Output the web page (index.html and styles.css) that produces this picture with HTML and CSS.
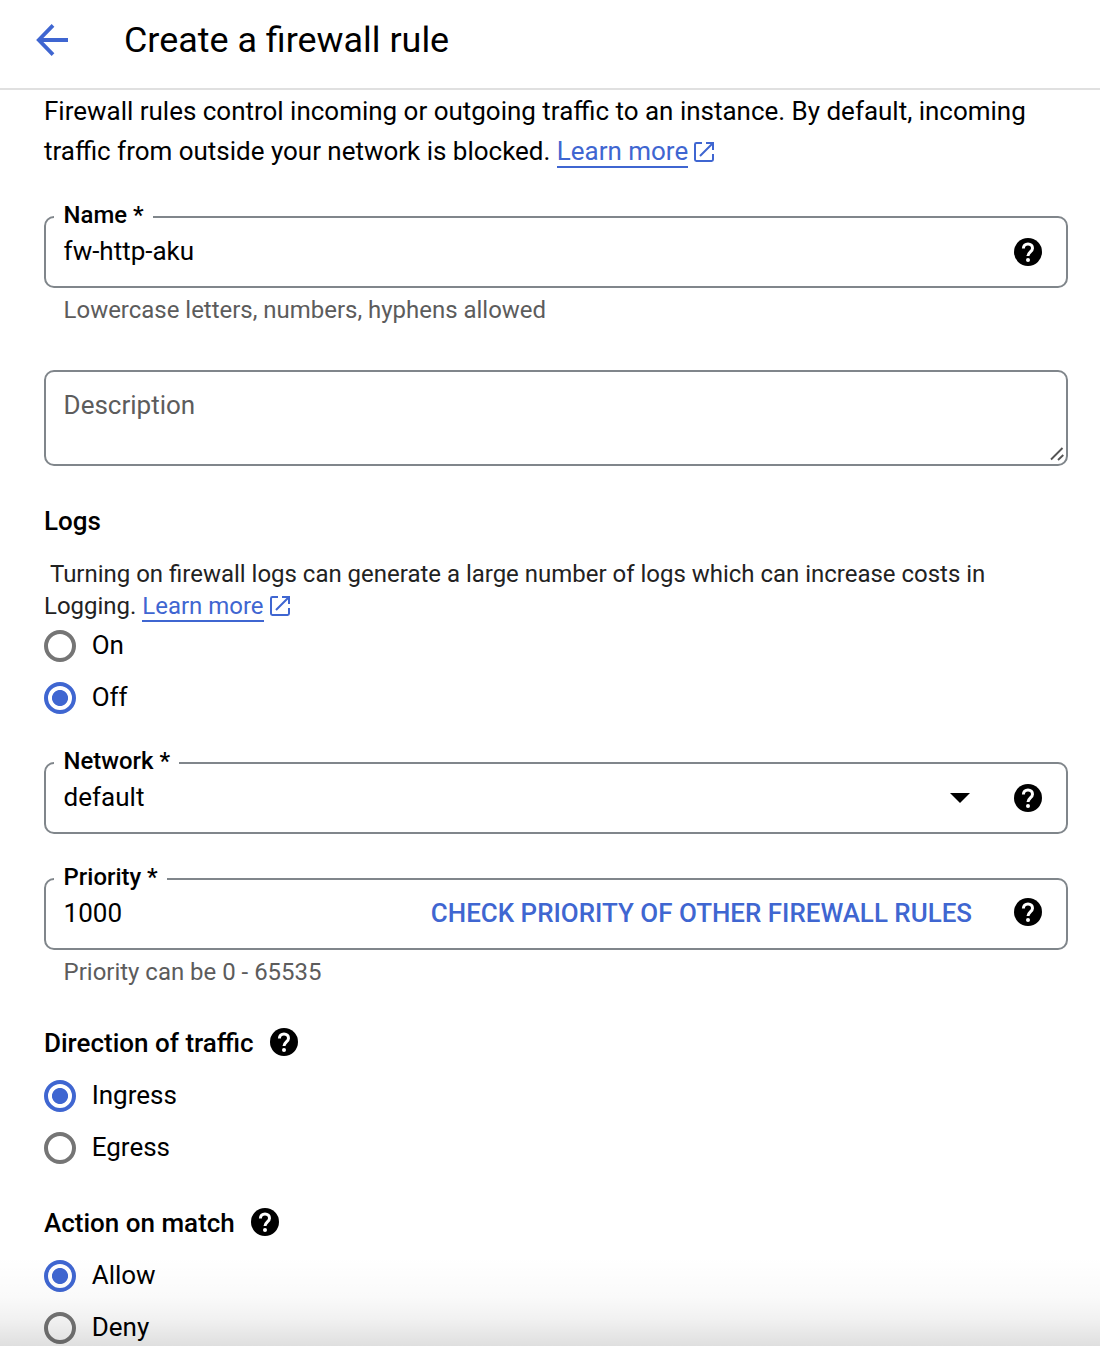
FILE: index.html
```html
<!DOCTYPE html>
<html lang="en">
<head>
<meta charset="utf-8">
<title>Create a firewall rule</title>
<link rel="stylesheet" href="styles.css">
</head>
<body>
<svg width="0" height="0" class="sprite" aria-hidden="true">
  <symbol id="help" viewBox="0 0 28 28">
    <circle cx="14" cy="14" r="14"/>
    <path d="M9.4 10.4C9.4 7.7 11.3 6 14 6s4.5 1.7 4.5 4.2c0 3.5-4.5 3.9-4.5 7.9" fill="none" stroke="#fff" stroke-width="3"/>
    <circle cx="14" cy="21.9" r="2" fill="#fff"/>
  </symbol>
  <symbol id="launch" viewBox="0 0 20 20">
    <path d="M8 1H2.4Q1 1 1 2.4V17.6Q1 19 2.4 19H17.6Q19 19 19 17.6V12M12 1H19V8M19 1L6 14" fill="none" stroke="currentColor" stroke-width="2"/>
  </symbol>
</svg>
<div class="page">
  <header class="header">
    <svg class="back" viewBox="0 0 32 32"><path d="M32 16H3.5M17 1.4L2.8 16L17 30.6" fill="none" stroke="currentColor" stroke-width="3.8"/></svg>
    <h1>Create a firewall rule</h1>
  </header>
  <main class="form">
    <p class="intro">Firewall rules control incoming or outgoing traffic to an instance. By default, incoming<br>traffic from outside your network is blocked. <a class="link">Learn more</a><svg class="launch"><use href="#launch"/></svg></p>

    <fieldset class="field name">
      <legend>Name *</legend>
      <div class="row"><span class="value">fw-http-aku</span><svg class="help"><use href="#help"/></svg></div>
    </fieldset>
    <p class="hint">Lowercase letters, numbers, hyphens allowed</p>

    <div class="description">
      <span>Description</span>
      <svg class="grip" viewBox="0 0 14 14"><path d="M1 12.5L12.5 1M8 13L13.3 8" fill="none" stroke="#555" stroke-width="1.9"/></svg>
    </div>

    <h2 class="logs-title">Logs</h2>
    <p class="logs">&nbsp;Turning on firewall logs can generate a large number of logs which can increase costs in<br>Logging. <a class="link">Learn more</a><svg class="launch"><use href="#launch"/></svg></p>
    <div class="radios">
      <div class="radio"><i></i><span>On</span></div>
      <div class="radio on"><i></i><span>Off</span></div>
    </div>

    <fieldset class="field network">
      <legend>Network *</legend>
      <div class="row"><span class="value">default</span><svg class="caret" viewBox="0 0 20 10"><path d="M0 0H20L10 10Z"/></svg><svg class="help"><use href="#help"/></svg></div>
    </fieldset>

    <fieldset class="field priority">
      <legend>Priority *</legend>
      <div class="row"><span class="value">1000</span><a class="action">CHECK PRIORITY OF OTHER FIREWALL RULES</a><svg class="help"><use href="#help"/></svg></div>
    </fieldset>
    <p class="hint">Priority can be 0 - 65535</p>

    <section class="group direction">
      <h2><span>Direction of traffic</span><svg class="help"><use href="#help"/></svg></h2>
      <div class="radios">
        <div class="radio on"><i></i><span>Ingress</span></div>
        <div class="radio"><i></i><span>Egress</span></div>
      </div>
    </section>
    <section class="group match">
      <h2><span>Action on match</span><svg class="help"><use href="#help"/></svg></h2>
      <div class="radios">
        <div class="radio on"><i></i><span>Allow</span></div>
        <div class="radio"><i></i><span>Deny</span></div>
      </div>
    </section>
  </main>
  <div class="fade"></div>
</div>
</body>
</html>
```
FILE: styles.css
```css
* { box-sizing: border-box; }
body { margin: 0; background: #fff; color: #000; font: 26px/32px Roboto, "Liberation Sans", sans-serif; }
h1, h2, p { margin: 0; font-weight: 400; white-space: nowrap; }
svg { display: block; flex: none; }
.sprite { position: absolute; }
.page { position: relative; height: 1346px; overflow: hidden; }
.header { display: flex; align-items: center; height: 90px; padding: 0 36px 8px; border-bottom: 2px solid #e0e0e0; }
.back { width: 32px; height: 32px; color: #3f66d1; }
h1 { margin-left: 56px; font-size: 35.9px; line-height: 48px; }
.form { display: flex; flex-direction: column; padding: 1px 32px 0 44px; }
.intro { font-size: 25.97px; line-height: 40px; }
.link { color: #3f66d1; border-bottom: 2px solid #3f66d1; }
.launch { display: inline-block; width: 20px; height: 20px; margin-left: 6px; color: #3f66d1; vertical-align: -2px; }
.field { min-width: 0; height: 85px; margin: 0; padding: 0 24px 0 8px; border: 2px solid #80868b; border-radius: 10px; }
legend { height: 28px; padding: 0 9px 0 9.6px; font-size: 23.9px; line-height: 24px; font-weight: 500; }
.row { display: flex; align-items: center; height: 42px; padding-left: 9.6px; }
.value { margin-right: auto; line-height: 40px; margin-top: -2px; }
.help { width: 28px; height: 28px; }
.caret { width: 20px; height: 10px; margin-right: 44px; }
.name { margin-top: 32px; }
.hint { padding-left: 19.6px; margin-top: 6px; font-size: 23.96px; color: #5c5c5c; }
.description { display: flex; justify-content: space-between; height: 96px; margin-top: 44px; padding: 17px 2px 3px 17.6px; border: 2px solid #80868b; border-radius: 10px; color: #5c5c5c; }
.grip { width: 14px; height: 14px; align-self: flex-end; }
h2 { font-size: 26px; font-weight: 500; }
.logs-title { margin-top: 39px; }
.logs { margin-top: 21px; font-size: 23.97px; color: #222; }
.radios { display: flex; flex-direction: column; gap: 20px; }
.logs + .radios { margin-top: 8px; }
.radio { display: flex; align-items: center; gap: 15.7px; height: 32px; }
.radio span { margin-top: -2px; }
.radio i { width: 32px; height: 32px; border: 4px solid #757575; border-radius: 50%; }
.radio.on i { border-color: #3f66d1; background: radial-gradient(circle, #3f66d1 7.6px, transparent 8.4px); }
.network { margin-top: 35px; }
.priority { margin-top: 31px; }
.action { margin: -2px 42px 0 0; color: #3f66d1; font-size: 25.94px; font-weight: 500; }
.priority .help { margin-top: -4px; }
.group h2 { display: flex; align-items: center; gap: 16px; }
.group .help { margin-top: -2px; }
.group .radios { margin-top: 21px; }
.direction { margin-top: 39px; }
.match { margin-top: 43px; }
.fade { position: absolute; left: 0; right: 0; bottom: 0; height: 90px; background: linear-gradient(transparent, rgba(0,0,0,.02) 45%, rgba(0,0,0,.055) 70%, rgba(0,0,0,.125)); }
```
